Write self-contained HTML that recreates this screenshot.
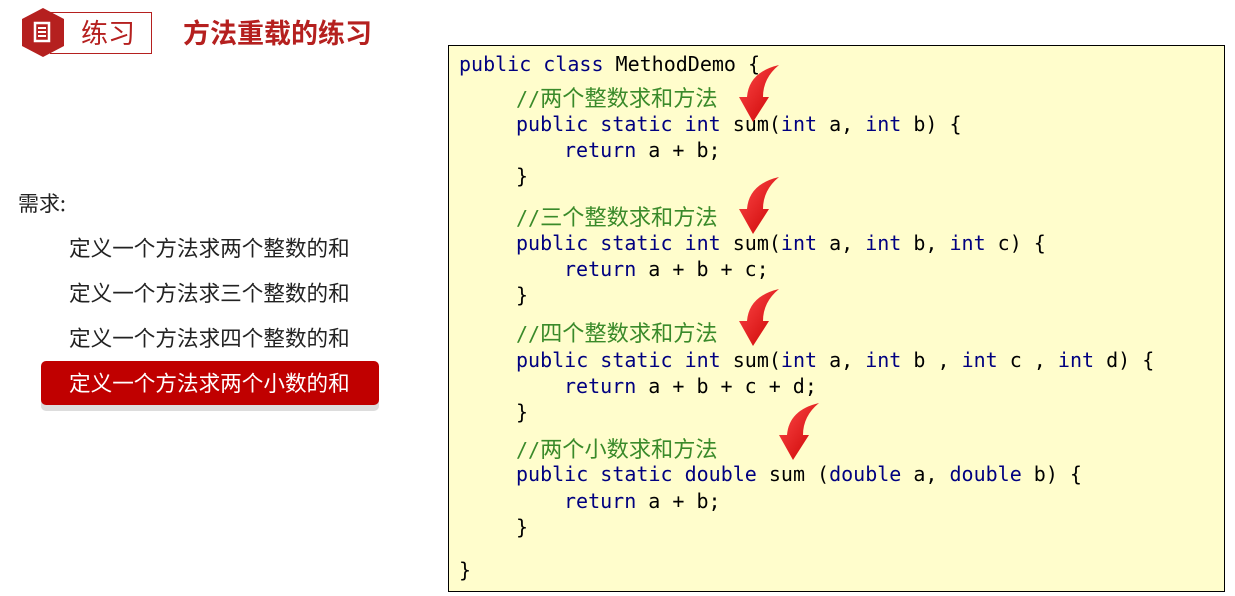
<!DOCTYPE html>
<html><head><meta charset="utf-8"><style>
body{margin:0;width:1235px;height:596px;background:#fff;position:relative;overflow:hidden;font-family:"Liberation Sans","Noto Sans CJK SC",sans-serif}
.a{position:absolute;white-space:pre}
.box{position:absolute;left:448px;top:45px;width:775px;height:545px;border:1px solid #000;background:#fffdcc}
.c{position:absolute;white-space:pre;font-family:"DejaVu Sans Mono","Liberation Mono","Noto Sans CJK SC",monospace;font-size:20px;line-height:26px;color:#000}
.k{color:#000080}
.g{color:#3a8a2a}
.g span{font-family:"Noto Sans CJK SC",sans-serif;font-size:22.2px}
.li{position:absolute;left:69px;font-size:21.6px;color:#222;line-height:26px;white-space:pre;font-family:"Noto Sans CJK SC",sans-serif}
</style></head><body>
<svg class="a" style="left:20px;top:6px" width="50" height="54" viewBox="0 0 50 54"><polygon points="23,2 44,13 44,40 23,51 2,40 2,13" fill="#b5201f"/><rect x="15" y="17" width="14" height="18" fill="none" stroke="#fff" stroke-width="2.5"/><path d="M18 22h8M18 26h8M18 30h8" stroke="#fff" stroke-width="2"/></svg>
<div class="a" style="left:50px;top:12px;width:101px;height:40px;border:1px solid #b5201f;border-left:none"></div>
<div class="a" style="left:81px;top:13px;font-size:27px;line-height:38px;color:#b5201f;font-family:'Noto Sans CJK SC',sans-serif">练习</div>
<div class="a" style="left:183px;top:13px;font-size:27px;line-height:38px;color:#b5201f;font-weight:bold;font-family:'Noto Sans CJK SC',sans-serif">方法重载的练习</div>
<div class="a" style="left:18px;top:190px;font-size:21px;line-height:26px;color:#222;font-family:'Noto Sans CJK SC',sans-serif">需求:</div>
<div class="li" style="top:235px">定义一个方法求两个整数的和</div>
<div class="li" style="top:280px">定义一个方法求三个整数的和</div>
<div class="li" style="top:325px">定义一个方法求四个整数的和</div>
<div class="a" style="left:41px;top:361px;width:338px;height:44px;background:#c00000;border-radius:5px;box-shadow:0 6px 0 #ddd"></div>
<div class="li" style="top:370px;color:#fff">定义一个方法求两个小数的和</div>
<div class="box"></div>
<div class="c" style="left:459px;top:51px"><span class="k">public class</span> MethodDemo {</div>
<div class="c g" style="left:516px;top:84px">//<span>两个整数求和方法</span></div>
<div class="c" style="left:516px;top:111px"><span class="k">public static int</span> sum(<span class="k">int</span> a, <span class="k">int</span> b) {</div>
<div class="c" style="left:564px;top:137px"><span class="k">return</span> a + b;</div>
<div class="c" style="left:516px;top:163px">}</div>
<div class="c g" style="left:516px;top:203px">//<span>三个整数求和方法</span></div>
<div class="c" style="left:516px;top:230px"><span class="k">public static int</span> sum(<span class="k">int</span> a, <span class="k">int</span> b, <span class="k">int</span> c) {</div>
<div class="c" style="left:564px;top:256px"><span class="k">return</span> a + b + c;</div>
<div class="c" style="left:516px;top:282px">}</div>
<div class="c g" style="left:516px;top:319px">//<span>四个整数求和方法</span></div>
<div class="c" style="left:516px;top:347px"><span class="k">public static int</span> sum(<span class="k">int</span> a, <span class="k">int</span> b , <span class="k">int</span> c , <span class="k">int</span> d) {</div>
<div class="c" style="left:564px;top:373px"><span class="k">return</span> a + b + c + d;</div>
<div class="c" style="left:516px;top:399px">}</div>
<div class="c g" style="left:516px;top:435px">//<span>两个小数求和方法</span></div>
<div class="c" style="left:516px;top:461px"><span class="k">public static double</span> sum (<span class="k">double</span> a, <span class="k">double</span> b) {</div>
<div class="c" style="left:564px;top:488px"><span class="k">return</span> a + b;</div>
<div class="c" style="left:516px;top:514px">}</div>
<div class="c" style="left:459px;top:557px">}</div>
<svg class="a" style="left:0;top:0" width="1235" height="596">
<defs><linearGradient id="r" x1="0" y1="0" x2="1" y2="1"><stop offset="0" stop-color="#ff4a4a"/><stop offset="1" stop-color="#c80000"/></linearGradient>
<path id="ar" d="M0,0 L-14,-25 L-6,-25 Q-4,-50 26,-57 Q10,-44 10,-25 L16,-25 Z" fill="url(#r)"/></defs>
<use href="#ar" x="753" y="122"/>
<use href="#ar" x="753" y="234"/>
<use href="#ar" x="753" y="346"/>
<use href="#ar" x="793" y="460"/>
</svg>
</body></html>
